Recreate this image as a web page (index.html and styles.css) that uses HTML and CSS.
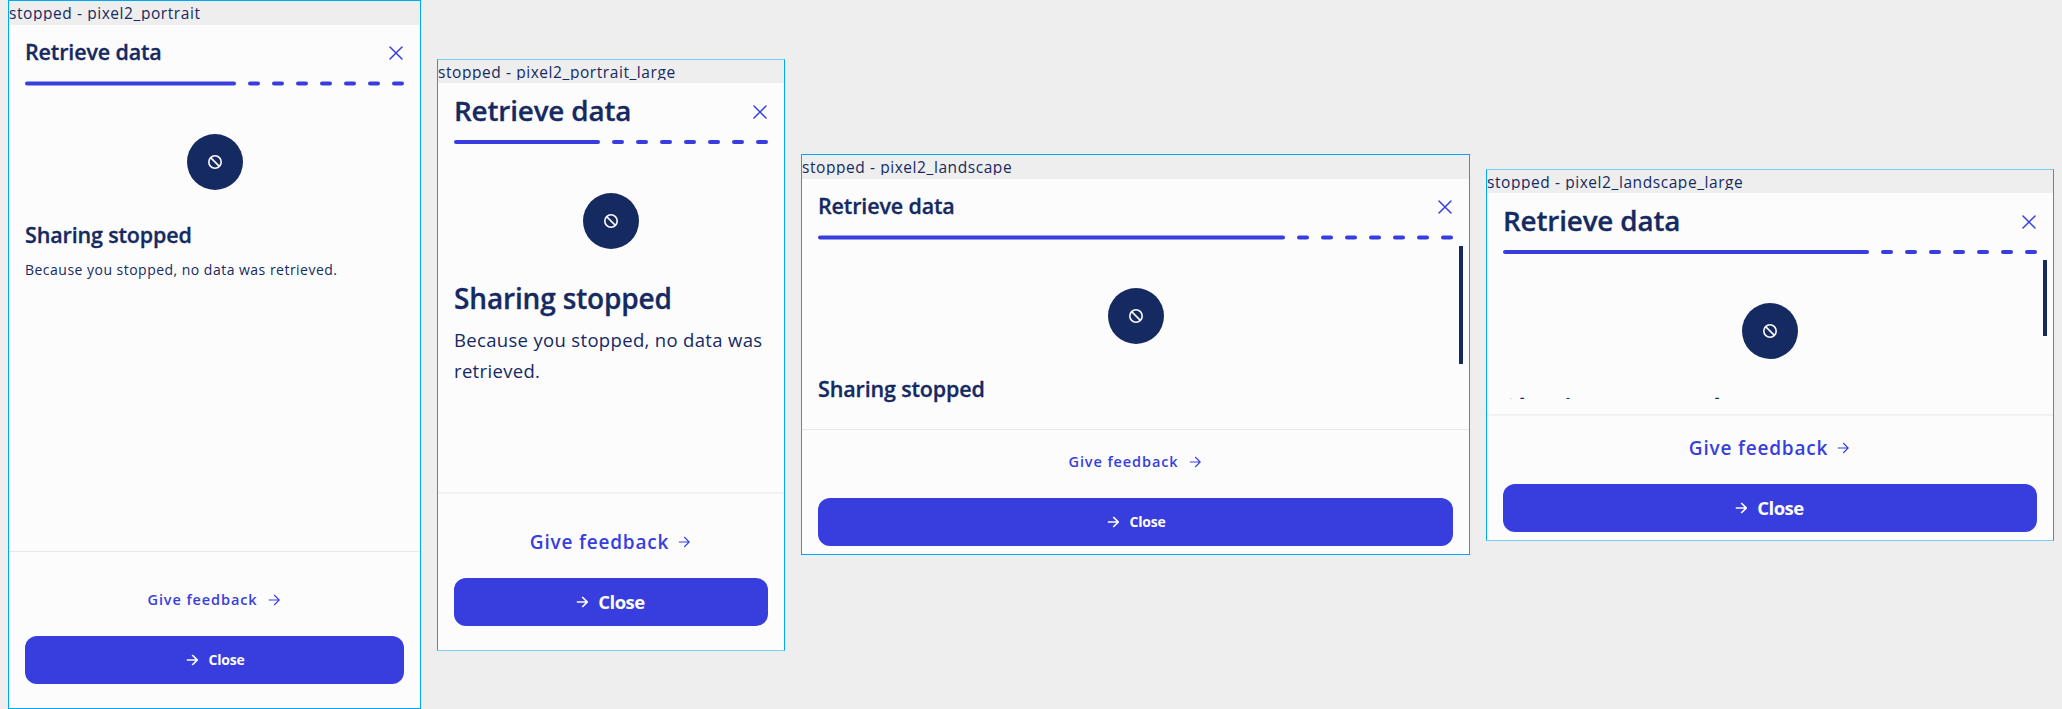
FILE: index.html
```html
<!DOCTYPE html>
<html lang="en">
<head>
<meta charset="utf-8">
<title>Retrieve data - stopped</title>
<link rel="stylesheet" href="styles.css">
</head>
<body>
<svg class="defs" width="0" height="0" aria-hidden="true">
  <symbol id="cross" viewBox="0 0 14 14"><path d="M1 1 13 13M13 1 1 13" fill="none" stroke="currentColor" stroke-width="1.5" stroke-linecap="round"/></symbol>
  <symbol id="arrow" viewBox="0 0 12 12"><path d="M.8 6H11M6.2 1 11.2 6 6.2 11" fill="none" stroke="currentColor"/></symbol>
  <symbol id="stop" viewBox="0 0 14 14"><path d="M2.6 2.6 11.4 11.4" stroke="currentColor" stroke-width="1.6"/><circle cx="7" cy="7" r="6.2" fill="none" stroke="currentColor" stroke-width="1.6"/></symbol>
</svg>
<main class="board">
  <section class="frame portrait">
    <div class="caption"><span>stopped - pixel2_portrait</span></div>
    <header class="top"><h1 class="title">Retrieve data</h1><svg class="cross"><use href="#cross"/></svg></header>
    <svg class="progress"><line x1="2" y1="2.5" x2="209" y2="2.5"/><line class="dash" x1="225" y1="2.5" x2="378" y2="2.5"/></svg>
    <div class="content"><div class="badge"><svg class="stop"><use href="#stop"/></svg></div><h2 class="heading">Sharing stopped</h2><p class="text">Because you stopped, no data was retrieved.</p></div>
    <footer class="actions"><a class="feedback"><span>Give feedback</span><svg class="arrow"><use href="#arrow"/></svg></a><button class="close"><svg class="arrow"><use href="#arrow"/></svg><span>Close</span></button></footer>
  </section>
  <section class="frame portrait-large large">
    <div class="caption"><span>stopped - pixel2_portrait_large</span></div>
    <header class="top"><h1 class="title">Retrieve data</h1><svg class="cross"><use href="#cross"/></svg></header>
    <svg class="progress"><line x1="2" y1="2" x2="144" y2="2"/><line class="dash" x1="160" y1="2" x2="313" y2="2"/></svg>
    <div class="content"><div class="badge"><svg class="stop"><use href="#stop"/></svg></div><h2 class="heading">Sharing stopped</h2><p class="text">Because you stopped, no data was retrieved.</p></div>
    <footer class="actions"><a class="feedback"><span>Give feedback</span><svg class="arrow"><use href="#arrow"/></svg></a><button class="close"><svg class="arrow"><use href="#arrow"/></svg><span>Close</span></button></footer>
  </section>
  <section class="frame landscape">
    <div class="caption"><span>stopped - pixel2_landscape</span></div>
    <header class="top"><h1 class="title">Retrieve data</h1><svg class="cross"><use href="#cross"/></svg></header>
    <svg class="progress"><line x1="2" y1="2.5" x2="465" y2="2.5"/><line class="dash" x1="481" y1="2.5" x2="634" y2="2.5"/></svg>
    <div class="content"><div class="badge"><svg class="stop"><use href="#stop"/></svg></div><h2 class="heading">Sharing stopped</h2></div>
    <footer class="actions"><a class="feedback"><span>Give feedback</span><svg class="arrow"><use href="#arrow"/></svg></a><button class="close"><svg class="arrow"><use href="#arrow"/></svg><span>Close</span></button></footer>
    <div class="scrollbar"></div>
  </section>
  <section class="frame landscape-large large">
    <div class="caption"><span>stopped - pixel2_landscape_large</span></div>
    <header class="top"><h1 class="title">Retrieve data</h1><svg class="cross"><use href="#cross"/></svg></header>
    <svg class="progress"><line x1="2" y1="2" x2="364" y2="2"/><line class="dash" x1="380" y1="2" x2="533" y2="2"/></svg>
    <div class="content"><div class="badge"><svg class="stop"><use href="#stop"/></svg></div><h2 class="heading">Sharing stopped</h2></div>
    <footer class="actions"><a class="feedback"><span>Give feedback</span><svg class="arrow"><use href="#arrow"/></svg></a><button class="close"><svg class="arrow"><use href="#arrow"/></svg><span>Close</span></button></footer>
    <div class="scrollbar"></div>
  </section>
</main>
</body>
</html>
```

FILE: styles.css
```css
* { box-sizing: border-box; }
body { margin: 0; background: #eee; color: #162a62; font-family: "Open Sans", "Noto Sans", sans-serif; }
.defs { position: absolute; }
h1, h2, p { margin: 0; }
.board { display: flex; align-items: center; gap: 16px; height: 709px; padding: 0 8px; }
.frame { position: relative; display: flex; flex-direction: column; flex: none; border: 1px solid #00a7f5; background: #fcfcfc; }
.portrait { width: 413px; height: 709px; }
.portrait-large { width: 348px; height: 592px; }
.landscape { width: 669px; height: 401px; }
.landscape-large { width: 568px; height: 372px; }
.large { margin-top: 1px; border-top-color: #7ccdf3; border-bottom-color: #7ccdf3; }

.caption { flex: none; height: 24px; background: #eee; }
.large .caption { height: 23px; }
.caption span { display: block; height: 20px; overflow: hidden; white-space: nowrap; font-size: 15.5px; line-height: 24px; letter-spacing: 0.57px; }
.top { flex: none; display: flex; justify-content: space-between; align-items: center; height: 56px; padding: 0 17px 0 16px; }
.large .top { height: 57px; }
.title, .heading { font-size: 21.5px; line-height: 32px; font-weight: 600; letter-spacing: -0.15px; white-space: nowrap; -webkit-text-stroke: 0.3px #162a62; }
.title { padding-bottom: 2px; }
.large .title { font-size: 27.8px; line-height: 40px; padding-bottom: 4px; }
.large .heading { font-size: 28px; line-height: 40px; }
.cross { width: 14px; height: 14px; color: #383ede; }

.progress { flex: none; display: block; width: calc(100% - 32px); height: 5px; margin-left: 16px; }
.progress line { stroke: #383ede; stroke-width: 4; stroke-linecap: round; }
.progress .dash { stroke-dasharray: 8 16; }

.content { flex: 1; min-height: 0; overflow: hidden; padding: 48px 16px 0; margin-bottom: 15px; }
.badge { display: flex; align-items: center; justify-content: center; width: 56px; height: 56px; margin: 0 auto 29px; border-radius: 50%; background: #162a62; color: #fcfcfc; }
.landscape-large .badge { margin-bottom: 29.5px; }
.stop { width: 14px; height: 14px; }
.text { margin-top: 7px; font-size: 14px; line-height: 24px; letter-spacing: 0.48px; }
.large .text { margin-top: 6px; font-size: 18.5px; line-height: 31px; letter-spacing: 0.33px; }

.actions { flex: none; display: flex; flex-direction: column; gap: 12px; border-top: 1px solid #e8e8ea; padding: 24px 16px; }
.large .actions { border-top: 2px solid #f2f2f3; }
.landscape .actions, .landscape-large .actions { padding: 8px 16px; }
.feedback { display: flex; align-items: center; justify-content: center; gap: 10px; height: 48px; padding: 0 2px 1px 0; color: #383ede; font-size: 14.5px; font-weight: 600; letter-spacing: 0.9px; }
.close { display: flex; align-items: center; justify-content: center; gap: 10px; height: 48px; border: 0; padding: 0 0 1px 2px; border-radius: 12px; background: #383ede; color: #fcfcfc; font-family: inherit; font-size: 14px; font-weight: 700; letter-spacing: -0.2px; }
.large .feedback { gap: 9px; font-size: 19px; letter-spacing: 0.8px; }
.large .close { padding: 0 1px 1px 0; font-size: 18.5px; letter-spacing: -0.5px; }
.arrow { width: 12px; height: 12px; }
.close .arrow { stroke-width: 1.7; }
.feedback .arrow { stroke-width: 1.1; }
.scrollbar { position: absolute; top: 91px; right: 6px; width: 4px; height: 118px; background: #162a62; }
.landscape-large .scrollbar { top: 90px; height: 76px; }
```
